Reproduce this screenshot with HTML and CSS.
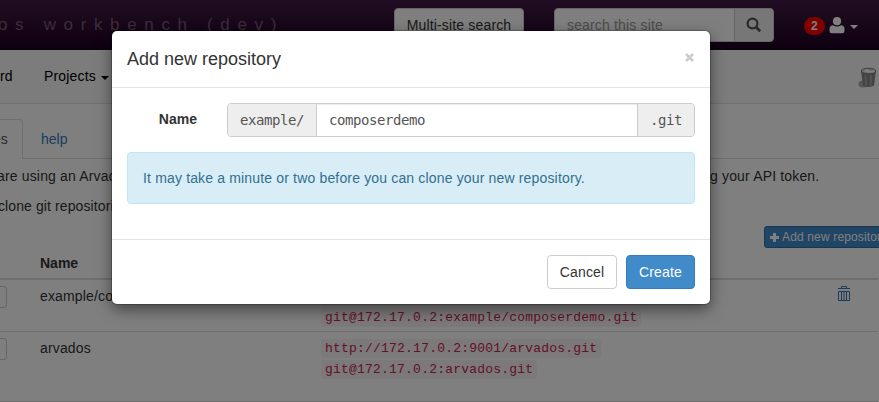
FILE: index.html
```html
<!DOCTYPE html>
<html lang="en">
<head>
<meta charset="utf-8">
<title>Workbench repositories</title>
<link rel="stylesheet" href="styles.css">
</head>
<body>
<div class="page">
  <header class="topbar">
    <span class="brand">os workbench (dev)</span>
    <button class="multi">Multi-site search</button>
    <div class="search">
      <span class="search-field">search this site</span>
      <span class="search-button">
        <svg width="16" height="16" viewBox="0 0 16 16"><circle cx="6.5" cy="6.5" r="4.900" fill="none" stroke="#555" stroke-width="2.300"/><path d="M10 10l4.200 4.200" stroke="#555" stroke-width="2.800"/></svg>
      </span>
    </div>
    <div class="user">
      <span class="badge">2</span>
      <svg width="16" height="17" viewBox="0 0 16 17"><circle cx="8" cy="4.200" r="4.100" fill="#fff"/><path d="M.5 14v-2.300C.5 9.400 2 8.400 4 8.200q4 2.700 8 0c2 .2 3.500 1.200 3.500 3.500V14q0 2.300-2.300 2.300H2.800Q.5 16.300.5 14z" fill="#fff"/></svg>
      <i class="caret"></i>
    </div>
  </header>
  <nav class="subnav">
    <span class="dash">rd</span>
    <span class="projects">Projects <i class="caret"></i></span>
    <svg class="trash" width="20" height="22" viewBox="0 0 20 22"><ellipse cx="5" cy="17" rx="4.500" ry="3.500" fill="#aaa"/><path d="M3 4l2 14.500q5 3 11 0L18 4z" fill="#888"/><path d="M7.500 8l.7 11M13 8l-.3 11" stroke="#a4a4a4" stroke-width="2"/><ellipse cx="10.500" cy="4" rx="7.200" ry="2.800" fill="#ccc" stroke="#808080"/><path d="M5 4l4-2 3 2 4-1 1 2q-6 2-12-1z" fill="#fff"/></svg>
  </nav>
  <main>
    <div class="tabs"><span class="tab active">es</span><span class="tab">help</span></div>
    <div class="copy"><span class="intro">are using an Arvados</span><span class="token">g your API token.</span></div>
    <div class="copy"><span class="clone">clone git repositories</span></div>
    <div class="actions"><button class="add"><svg width="9" height="9" viewBox="0 0 9 9"><path d="M3 0h3v3h3v3H6v3H3V6H0V3h3z" fill="#fff"/></svg><span>Add new repository</span></button></div>
    <div class="table">
      <div class="row head"><span></span><span>Name</span></div>
      <div class="row">
        <span><button class="mini"></button></span><span class="cell">example/composerdemo</span>
        <span class="urls"><code>http://172.17.0.2:9001/example/composerdemo.git</code><code>git@172.17.0.2:example/composerdemo.git</code></span>
        <svg class="bin" width="12" height="16" viewBox="0 0 12 16"><path d="M0 2.500h12M3.500 2V.5h5V2M.5 5.500h11v9H.5zM3.500 5v9M6 5v9M8.500 5v9" fill="none" stroke="#337ab7"/></svg>
      </div>
      <div class="row last">
        <span><button class="mini"></button></span><span class="cell">arvados</span>
        <span class="urls"><code>http://172.17.0.2:9001/arvados.git</code><code>git@172.17.0.2:arvados.git</code></span>
      </div>
    </div>
  </main>
</div>
<div class="backdrop">
  <section class="modal">
    <header class="modal-head"><h4>Add new repository</h4><svg width="9" height="9" viewBox="0 0 9 9"><path d="M1 1l7 7M8 1L1 8" stroke="#ccc" stroke-width="2.600"/></svg></header>
    <div class="modal-body">
      <div class="form"><label>Name</label><div class="group"><span class="addon">example/</span><span class="input">composerdemo</span><span class="addon git">.git</span></div></div>
      <div class="alert"><span>It may take a minute or two before you can clone your new repository.</span></div>
    </div>
    <footer class="modal-foot"><button class="cancel">Cancel</button><button class="create">Create</button></footer>
  </section>
</div>
</body>
</html>
```
FILE: styles.css
```css
* { box-sizing: border-box; }
body { margin: 0; width: 879px; height: 402px; overflow: hidden; font: 14px/20px "Liberation Sans", Arial, sans-serif; letter-spacing: .16px; color: #333; }
button { font: inherit; letter-spacing: inherit; color: inherit; padding: 0; white-space: nowrap; }
svg { display: block; flex: none; }
.page { height: 402px; overflow: hidden; background: #fff; white-space: nowrap; }
.topbar { height: 50px; display: flex; align-items: flex-start; background: linear-gradient(#431a43, #1c0022); }
.brand { width: 394px; flex: none; padding-top: 14px; margin-left: -2px; font-size: 17px; line-height: 22px; letter-spacing: 7.65px; color: #79587c; margin-right: 2px; }
.multi { width: 130px; height: 34px; margin-top: 8px; border: 1px solid #ccc; border-radius: 4px; background: #fff; }
.search { display: flex; width: 220px; height: 34px; margin: 8px 0 0 30px; border: 1px solid #ccc; border-radius: 4px; background: #fff; overflow: hidden; }
.search-field { flex: 1; padding: 6px 12px; color: #999; }
.search-button { width: 39px; border-left: 1px solid #ccc; background: #eee; display: flex; align-items: center; justify-content: center; }
.user { display: flex; align-items: center; height: 50px; margin-left: 30px; color: #fff; }
.badge { width: 21px; height: 18px; border-radius: 9px; background: #f00; font-size: 12px; font-weight: bold; line-height: 18px; text-align: center; margin: 2px 4px 0 0; }
.caret { display: inline-block; border: 4px solid transparent; border-top-color: currentColor; border-bottom: 0; vertical-align: middle; }
.user .caret { margin: 4px 0 0 5px; }
.subnav { height: 54px; display: flex; align-items: center; background: #f8f8f8; border-bottom: 1px solid #e0e0e0; color: #000; }
.dash { width: 44px; }
.projects { width: 814px; }
.dash, .projects { padding-bottom: 1px; }
.projects .caret { margin: 2px 0 0 1px; }
.trash { margin-top: 2px; }
main { padding-top: 15px; }
.tabs { display: flex; height: 40px; border-bottom: 1px solid #ddd; }
.tab { padding: 10px 18px; letter-spacing: 0; color: #337ab7; }
.tab.active { width: 23px; height: 40px; padding: 9px 0; text-indent: -7px; color: #555; background: #fff; border: 1px solid #ddd; border-width: 1px 1px 0 0; border-radius: 0 4px 0 0; }
.copy { display: flex; height: 30px; padding-top: 7px; }
.intro { width: 713px; margin-left: -3px; }
.clone { margin-left: -2px; letter-spacing: .1px; }
.actions { display: flex; height: 30px; padding: 7px 0 0 764px; }
.add { width: 128px; flex: none; height: 22px; display: flex; align-items: center; gap: 3px; padding-left: 5px; border: 1px solid #2e6da4; border-radius: 3px; background: #428bca; color: #fff; font-size: 12px; letter-spacing: .15px; }
.row { display: grid; grid-template-columns: 40px 281px 517px 30px; height: 52px; border-bottom: 1px solid #ddd; padding-top: 6px; width: 878px; }
.row.head { height: 31px; border-bottom: 2px solid #ddd; padding-top: 4px; font-weight: bold; letter-spacing: 0; }
.row.last { height: 70px; }
.mini { display: block; width: 8px; height: 22px; margin-left: -1px; border: 1px solid #ccc; border-radius: 0 3px 3px 0; background: #fff; }
.urls { display: flex; flex-direction: column; align-items: flex-start; gap: 2px; padding-top: 1px; }
code { height: 19px; padding: 0 4px; border-radius: 4px; background: #f9f2f4; color: #c7254e; font: 13px/19px "Liberation Mono", monospace; letter-spacing: .21px; }
.backdrop { position: absolute; inset: 0; background: rgba(0,0,0,.5); padding-top: 31px; }
.modal { width: 598px; height: 273px; margin-left: 112px; border-radius: 5px; background: #fff; box-shadow: 0 0 0 1px rgba(0,0,0,.2), 0 5px 15px rgba(0,0,0,.5); }
.modal-head { height: 57px; display: flex; justify-content: space-between; padding: 15px; border-bottom: 1px solid #e5e5e5; }
h4 { margin: 0; font-size: 18px; font-weight: normal; line-height: 26px; letter-spacing: 0; }
.modal-head svg { margin: 7px 1px 0 0; }
.modal-body { height: 151px; padding: 15px; }
.form { display: flex; height: 34px; }
label { width: 100px; padding: 6px 30px 0 0; text-align: right; font-weight: bold; letter-spacing: 0; }
.group { flex: 1; display: flex; border: 1px solid #ccc; border-radius: 4px; overflow: hidden; font: 14px/32px "DejaVu Sans Mono", monospace; letter-spacing: -.43px; color: #555; }
.addon { width: 89px; padding-left: 12px; background: #eee; border-right: 1px solid #ccc; }
.input { flex: 1; padding-left: 12px; box-shadow: inset 0 1px 1px rgba(0,0,0,.075); }
.addon.git { width: 57px; border: 0; border-left: 1px solid #ccc; }
.alert { height: 52px; margin-top: 15px; padding: 15px; border: 1px solid #bce8f1; border-radius: 4px; background: #d9edf7; color: #31708f; }
.modal-foot { height: 65px; display: flex; justify-content: flex-end; gap: 9px; padding: 15px; border-top: 1px solid #e5e5e5; }
.cancel, .create { height: 34px; border: 1px solid #ccc; border-radius: 4px; background: #fff; }
.cancel { width: 70px; }
.create { width: 69px; border-color: #357ebd; background: #428bca; color: #fff; }
```
